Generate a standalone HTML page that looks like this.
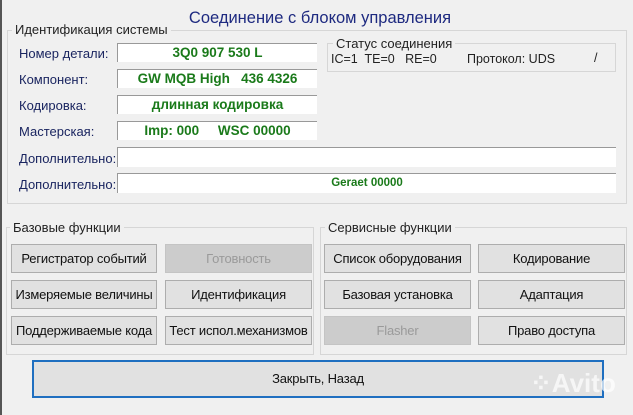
<!DOCTYPE html>
<html><head><meta charset="utf-8"><style>
body{margin:0;width:633px;height:415px;background:#f0f0f0;position:relative;overflow:hidden;font-family:"Liberation Sans",sans-serif;}
.a{position:absolute;}
.edge{left:0;top:0;width:2px;height:415px;background:#555;}
.title{left:0;width:640px;top:9px;text-align:center;font-size:16.5px;color:#1e2a80;}
.grp{position:absolute;border:1px solid #d6d6d6;}
.leg{position:absolute;background:#f0f0f0;padding:0 3px;font-size:13px;color:#222;}
.lbl{position:absolute;left:19px;font-size:13px;color:#1a2560;}
.box{position:absolute;background:#fff;border-top:1px solid #999;border-left:1px solid #999;text-align:center;font-weight:bold;color:#1a7a1a;font-size:13.5px;line-height:18px;}
.btn{position:absolute;background:#e1e1e1;border:1px solid #adadad;box-sizing:border-box;font-size:13px;color:#111;text-align:center;line-height:27px;white-space:nowrap;letter-spacing:-0.2px}
.dis{background:#cccccc;border-color:#c4c4c4;color:#9a9a9a;}
</style></head><body>
<div class="a edge"></div>
<div class="a title">Соединение с блоком управления</div>

<div class="grp" style="left:7px;top:30px;width:618px;height:172px;"></div>
<div class="leg" style="left:12px;top:22px;">Идентификация системы</div>

<div class="lbl" style="top:46px;">Номер детали:</div>
<div class="lbl" style="top:72px;">Компонент:</div>
<div class="lbl" style="top:98px;">Кодировка:</div>
<div class="lbl" style="top:124px;">Мастерская:</div>
<div class="lbl" style="top:151px;">Дополнительно:</div>
<div class="lbl" style="top:177px;">Дополнительно:</div>

<div class="box" style="left:117px;top:43px;width:199px;height:18px;">3Q0 907 530 L</div>
<div class="box" style="left:117px;top:69px;width:199px;height:18px;">GW MQB High&nbsp;&nbsp; 436 4326</div>
<div class="box" style="left:117px;top:95px;width:199px;height:18px;">длинная кодировка</div>
<div class="box" style="left:117px;top:121px;width:199px;height:18px;">Imp: 000&nbsp;&nbsp;&nbsp;&nbsp; WSC 00000</div>
<div class="box" style="left:117px;top:147px;width:498px;height:19px;"></div>
<div class="box" style="left:117px;top:173px;width:498px;height:19px;font-size:11.5px;">Geraet 00000</div>

<div class="grp" style="left:327px;top:43px;width:287px;height:27px;"></div>
<div class="leg" style="left:333px;top:36px;">Статус соединения</div>
<div class="a" style="left:331px;top:52px;font-size:12.5px;color:#222;">IC=1&nbsp; TE=0&nbsp;&nbsp; RE=0</div>
<div class="a" style="left:467px;top:52px;font-size:12.5px;color:#222;">Протокол: UDS</div>
<div class="a" style="left:594px;top:51px;font-size:12.5px;color:#222;">/</div>

<div class="grp" style="left:6px;top:227px;width:306px;height:126px;"></div>
<div class="leg" style="left:10px;top:220px;">Базовые функции</div>
<div class="grp" style="left:320px;top:227px;width:305px;height:126px;"></div>
<div class="leg" style="left:325px;top:220px;">Сервисные функции</div>

<div class="btn" style="left:11px;top:244px;width:146px;height:29px;">Регистратор событий</div>
<div class="btn dis" style="left:165px;top:244px;width:147px;height:29px;">Готовность</div>
<div class="btn" style="left:11px;top:280px;width:146px;height:29px;">Измеряемые величины</div>
<div class="btn" style="left:165px;top:280px;width:147px;height:29px;">Идентификация</div>
<div class="btn" style="left:11px;top:316px;width:146px;height:29px;">Поддерживаемые кода</div>
<div class="btn" style="left:165px;top:316px;width:147px;height:29px;">Тест испол.механизмов</div>

<div class="btn" style="left:324px;top:244px;width:147px;height:29px;">Список оборудования</div>
<div class="btn" style="left:478px;top:244px;width:147px;height:29px;">Кодирование</div>
<div class="btn" style="left:324px;top:280px;width:147px;height:29px;">Базовая установка</div>
<div class="btn" style="left:478px;top:280px;width:147px;height:29px;">Адаптация</div>
<div class="btn dis" style="left:324px;top:316px;width:147px;height:29px;">Flasher</div>
<div class="btn" style="left:478px;top:316px;width:147px;height:29px;">Право доступа</div>

<div class="btn" style="left:32px;top:360px;width:572px;height:38px;border:2px solid #1f6fc0;line-height:34px;">Закрыть, Назад</div>
<div class="a" style="left:530px;top:368px;font-size:26px;font-weight:bold;color:rgba(255,255,255,0.7);">⁘Avito</div>
</body></html>
